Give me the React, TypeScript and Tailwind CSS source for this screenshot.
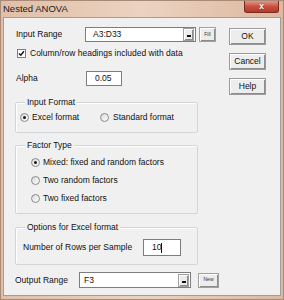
import React from "react";

function Radio({ checked }: { checked?: boolean }) {
  return (
    <span className="w-[9px] h-[9px] rounded-full border border-[#8a8a8a] bg-linear-to-br from-[#d8d8d8] to-white flex items-center justify-center shrink-0">
      {checked && <span className="w-[3px] h-[3px] rounded-full bg-[#1a1a1a]" />}
    </span>
  );
}

function Btn({ label }: { label: string }) {
  return (
    <div className="w-[37px] h-[17px] border border-[#9a9a9a] bg-[#ededed] shadow-[inset_1px_1px_0_#ffffff,inset_-1px_-1px_0_#8c8c8c] flex items-center justify-center text-[8.5px] text-[#111]">
      {label}
    </div>
  );
}

function SmallBtn({ label, w }: { label: string; w: string }) {
  return (
    <div className={`${w} h-[15px] border border-[#a0a0a0] bg-[#ececec] shadow-[inset_1px_1px_0_#ffffff,inset_-1px_-1px_0_#8c8c8c] flex items-center justify-center text-[5px] text-[#333]`}>
      {label}
    </div>
  );
}

function Dots() {
  return (
    <div className="w-[11px] h-[13px] border border-[#a0a0a0] bg-[#ececec] shadow-[inset_1px_1px_0_#ffffff,inset_-1px_-1px_0_#8c8c8c] flex items-end justify-center pb-[3px] shrink-0">
      <span className="w-[4px] h-[2px] bg-[#111]" />
    </div>
  );
}

function Group({ title, h, children, cls }: { title: string; h: string; children: React.ReactNode; cls: string }) {
  return (
    <div className={`relative w-[183px] ${h} border border-[#d2d6da] rounded-[2px] shadow-[inset_1px_1px_0_#ffffff] ${cls}`}>
      <span className="absolute left-[9px] top-[-6px] bg-[#f0f0f0] px-[2px] leading-[10px] text-[8.5px] text-[#111]">{title}</span>
      {children}
    </div>
  );
}

export default function App() {
  return (
    <div className="w-[284px] h-[300px] bg-linear-to-r from-[#dfbfa8] via-[#ebd3c1] to-[#dcb89f] border border-[#a98a76] flex flex-col font-['Liberation_Sans',Arial,sans-serif] text-[#111] overflow-hidden">
      <div className="h-[16px] flex items-start justify-between">
        <span className="ml-[2px] mt-[2px] text-[9.5px] leading-[11px] text-[#1a1a1a]">Nested ANOVA</span>
        <div className="mr-[4px] w-[35px] h-[12px] rounded-b-[3px] border border-t-0 border-[#7a2a20] bg-linear-to-b from-[#e2968a] via-[#c9503f] to-[#b8382a] flex items-center justify-center">
          <span className="text-white text-[9px] font-bold leading-none [text-shadow:0_0_1px_#4a1010]">x</span>
        </div>
      </div>
      <div className="ml-[2px] w-[278px] h-[279px] border border-[#9e9e9e] bg-[#f0f0f0] flex text-[8.5px]">
        <div className="w-[225px] pl-[11px] pt-[9px] flex flex-col">
          <div className="h-[15px] flex items-center">
            <span className="w-[70px] pl-[1px]">Input Range</span>
            <div className="w-[111px] h-[15px] border border-[#7d7d7d] bg-white flex items-center justify-between pl-[7px] pr-[1px]">
              <span>A3:D33</span>
              <Dots />
            </div>
            <div className="ml-[3px]"><SmallBtn label="Fill" w="w-[17px]" /></div>
          </div>
          <div className="mt-[6px] h-[10px] flex items-center">
            <span className="ml-[2px] w-[9px] h-[9px] border border-[#7d7d7d] bg-white flex items-center justify-center">
              <svg width="7" height="7" viewBox="0 0 7 7"><path d="M1 3.5 L2.8 5.3 L6 1.3" stroke="#111" strokeWidth="1.4" fill="none" /></svg>
            </span>
            <span className="ml-[4px]">Column/row headings included with data</span>
          </div>
          <div className="mt-[13px] h-[15px] flex items-center">
            <span className="w-[71px] pl-[1px]">Alpha</span>
            <div className="w-[36px] h-[15px] border border-[#7d7d7d] bg-white flex items-center pl-[8px]">0.05</div>
          </div>
          <Group title="Input Format" h="h-[31px]" cls="mt-[16px]">
            <div className="pt-[10px] pl-[4px] flex items-center h-[19px]">
              <div className="w-[80px] flex items-center gap-[3px]"><Radio checked /><span>Excel format</span></div>
              <div className="flex items-center gap-[4px]"><Radio /><span>Standard format</span></div>
            </div>
          </Group>
          <Group title="Factor Type" h="h-[69px]" cls="mt-[12px]">
            <div className="pt-[12px] pl-[15px] flex flex-col gap-[9px]">
              <div className="h-[9px] flex items-center gap-[3px]"><Radio checked /><span>Mixed: fixed and random factors</span></div>
              <div className="h-[9px] flex items-center gap-[3px]"><Radio /><span>Two random factors</span></div>
              <div className="h-[9px] flex items-center gap-[3px]"><Radio /><span>Two fixed factors</span></div>
            </div>
          </Group>
          <Group title="Options for Excel format" h="h-[38px]" cls="mt-[13px]">
            <div className="pt-[11px] pl-[7px] flex items-center">
              <span className="w-[120px]">Number of Rows per Sample</span>
              <div className="w-[38px] h-[17px] border border-[#7d7d7d] bg-white flex items-center pl-[8px]">
                <span>10</span><span className="w-[1px] h-[10px] bg-[#111]" />
              </div>
            </div>
          </Group>
          <div className="mt-[7px] h-[16px] flex items-center">
            <span className="w-[64px]">Output Range</span>
            <div className="w-[112px] h-[16px] border border-[#7d7d7d] bg-white flex items-center justify-between pl-[4px] pr-[1px]">
              <span>F3</span>
              <Dots />
            </div>
            <div className="ml-[7px]"><SmallBtn label="New" w="w-[21px]" /></div>
          </div>
        </div>
        <div className="pt-[10px] flex flex-col gap-[8px]">
          <Btn label="OK" />
          <Btn label="Cancel" />
          <Btn label="Help" />
        </div>
      </div>
    </div>
  );
}
